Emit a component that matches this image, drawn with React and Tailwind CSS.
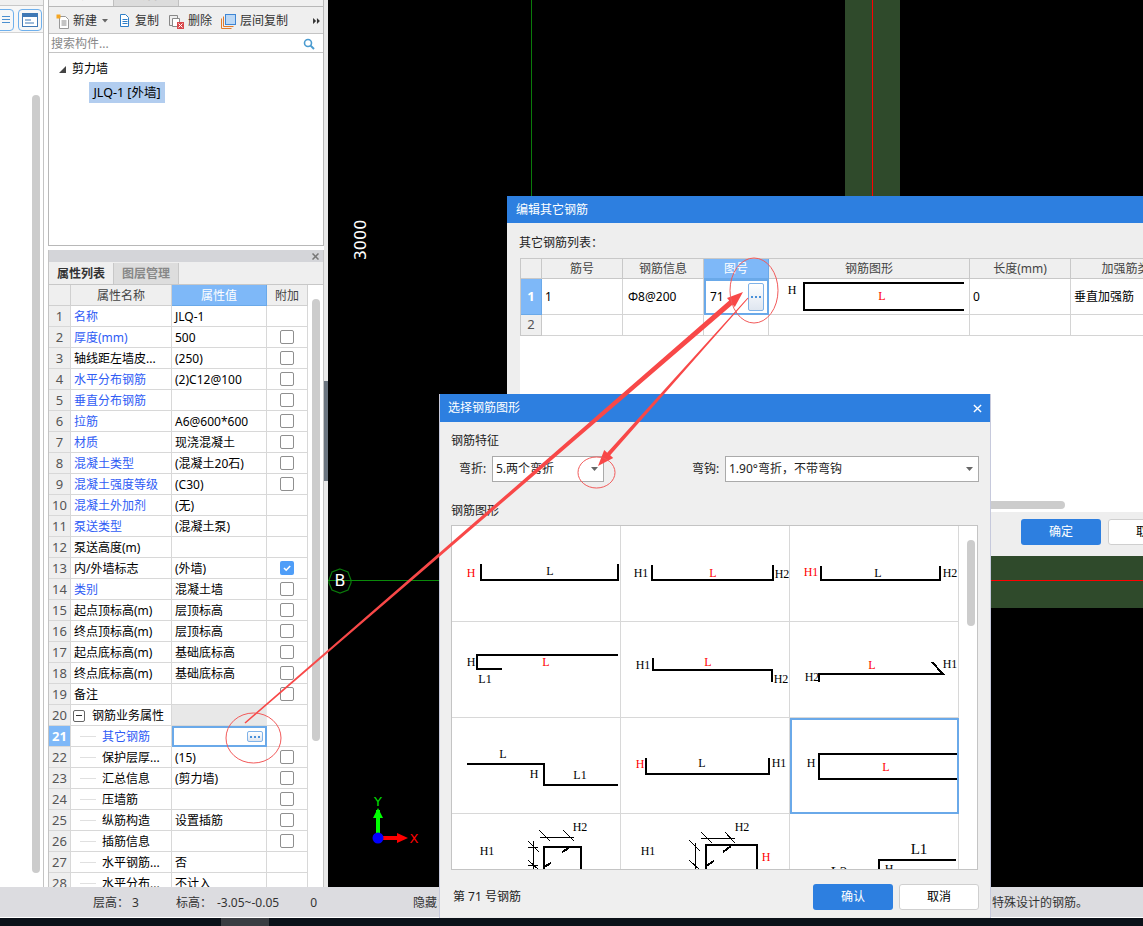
import React from "react";

const rows = [
  ["名称", "JLQ-1", 1, 0], ["厚度(mm)", "500", 1, 1], ["轴线距左墙皮...", "(250)", 0, 1], ["水平分布钢筋", "(2)C12@100", 1, 1],
  ["垂直分布钢筋", "", 1, 1], ["拉筋", "A6@600*600", 1, 1], ["材质", "现浇混凝土", 1, 1], ["混凝土类型", "(混凝土20石)", 1, 1],
  ["混凝土强度等级", "(C30)", 1, 1], ["混凝土外加剂", "(无)", 1, 0], ["泵送类型", "(混凝土泵)", 1, 0], ["泵送高度(m)", "", 0, 0],
  ["内/外墙标志", "(外墙)", 0, 2], ["类别", "混凝土墙", 1, 1], ["起点顶标高(m)", "层顶标高", 0, 1], ["终点顶标高(m)", "层顶标高", 0, 1],
  ["起点底标高(m)", "基础底标高", 0, 1], ["终点底标高(m)", "基础底标高", 0, 1], ["备注", "", 0, 1],
];
const subRows = [
  ["保护层厚...", "(15)", 1], ["汇总信息", "(剪力墙)", 1], ["压墙筋", "", 1], ["纵筋构造", "设置插筋", 1], ["插筋信息", "", 1], ["水平钢筋...", "否", 0], ["水平分布...", "不计入", 0],
];

function Checkbox({ state }) {
  if (!state) return null;
  if (state === 2)
    return (
      <span className="flex h-[14px] w-[14px] items-center justify-center rounded-[2px] bg-[#4f9ef8]">
        <svg width="10" height="10" viewBox="0 0 10 10"><path d="M2 5l2.2 2.2L8.2 3" fill="none" stroke="#fff" strokeWidth="1.6" /></svg>
      </span>
    );
  return <span className="block h-[14px] w-[14px] rounded-[2px] border border-[#8f8f8f] bg-white" />;
}

function DotsButton({ className }) {
  return (
    <span className={"flex items-center justify-center gap-[2px] rounded-[2px] border border-[#7fb2e8] bg-gradient-to-b from-[#ffffff] to-[#dfe6f0] " + className}>
      <i className="block h-[2px] w-[2px] bg-[#4a90d9]" />
      <i className="block h-[2px] w-[2px] bg-[#4a90d9]" />
      <i className="block h-[2px] w-[2px] bg-[#4a90d9]" />
    </span>
  );
}

function Idx({ children, active }) {
  return (
    <div className={"flex h-[21px] items-center justify-center border-b border-r border-[#d8d8d8] pt-[1px] text-[13px] " + (active ? "bg-[#7eb8f8] font-bold text-white" : "bg-[#efefef] text-[#555]")}>
      {children}
    </div>
  );
}
function Cell({ children, className = "text-black pl-[3px]" }) {
  return <div className={"flex h-[21px] items-center overflow-hidden whitespace-nowrap border-b border-r border-[#d8d8d8] pt-[1px] " + className}>{children}</div>;
}
function AttachCell({ state }) {
  return <div className="flex h-[21px] items-center justify-center border-b border-r border-[#d8d8d8]"><Checkbox state={state} /></div>;
}
function SubName({ children, blue }) {
  return (
    <div className={"flex h-[21px] items-center overflow-hidden whitespace-nowrap border-b border-r border-[#d8d8d8] pl-[9px] pt-[1px] " + (blue ? "text-[#2f5cf5]" : "text-black")}>
      <span className="mr-[6px] block h-px w-[16px] shrink-0 bg-[#e0e0e0]" />
      {children}
    </div>
  );
}

function PropertyTable() {
  return (
    <div className="grid grid-cols-[22px_101px_95px_41px] content-start">
      <div className="h-[21px] border-b border-r border-[#d0d0d0] bg-[#efefef]" />
      <div className="flex h-[21px] items-center justify-center border-b border-r border-[#d0d0d0] bg-[#efefef] pt-[1px] text-[#444]">属性名称</div>
      <div className="flex h-[21px] items-center justify-center border-b border-r border-[#6aa9e9] bg-[#7eb8f8] pt-[1px] text-white">属性值</div>
      <div className="flex h-[21px] items-center justify-center border-b border-r border-[#d0d0d0] bg-[#efefef] pt-[1px] text-[#444]">附加</div>
      {rows.map((r, i) => (
        <React.Fragment key={i}>
          <Idx>{i + 1}</Idx>
          <Cell className={"pl-[3px] " + (r[2] ? "text-[#2f5cf5]" : "text-black")}>{r[0]}</Cell>
          <Cell className="pl-[3px] text-black">{r[1]}</Cell>
          <AttachCell state={r[3]} />
        </React.Fragment>
      ))}
      <Idx>20</Idx>
      <Cell className="pl-[2px] text-black">
        <span className="mr-[7px] flex h-[12px] w-[12px] items-center justify-center rounded-[2px] border border-[#666]"><i className="block h-px w-[6px] bg-[#333]" /></span>
        钢筋业务属性
      </Cell>
      <div className="h-[21px] border-b border-[#d8d8d8] bg-[#e8e8e8]" />
      <div className="h-[21px] border-b border-r border-[#d8d8d8]" />
      <Idx active>21</Idx>
      <SubName blue>其它钢筋</SubName>
      <div className="flex h-[21px] items-center justify-end border-2 border-[#6aa9e9] pr-[2px]">
        <DotsButton className="h-[11px] w-[16px]" />
      </div>
      <div className="h-[21px] border-b border-r border-[#d8d8d8]" />
      {subRows.map((r, i) => (
        <React.Fragment key={i}>
          <Idx>{22 + i}</Idx>
          <SubName>{r[0]}</SubName>
          <Cell>{r[1]}</Cell>
          <AttachCell state={r[2]} />
        </React.Fragment>
      ))}
    </div>
  );
}

function ToolBtn({ icon, label, className = "" }) {
  return (
    <div className={"flex items-center gap-[3px] " + className}>
      {icon}
      <span className="text-[#333]">{label}</span>
    </div>
  );
}

function LeftStrip() {
  return (
    <div className="relative flex h-full w-[44px] shrink-0 flex-col border-r border-[#c4c4c4] bg-white">
      <div className="h-[6px] border-b border-[#c8c8c8] bg-[#f0f0f0]" />
      <div className="flex h-[27px] items-center gap-[4px] border-b border-[#d4d4d4] bg-[#f7f7f7] pt-[1px]">
        <div className="ml-[-10px] flex h-[22px] w-[24px] flex-col items-center justify-center gap-[2px] rounded-[4px] border border-[#6fb0ec] pl-[8px]">
          <i className="block h-px w-[8px] bg-[#4a8fd0]" />
          <i className="block h-px w-[8px] bg-[#4a8fd0]" />
          <i className="block h-px w-[8px] bg-[#4a8fd0]" />
        </div>
        <div className="flex h-[22px] w-[24px] items-center justify-center rounded-[4px] border border-[#6fb0ec]">
          <svg width="16" height="14" viewBox="0 0 16 14">
            <rect x="0.5" y="0.5" width="15" height="13" fill="#fff" stroke="#3f78b5" />
            <rect x="0.5" y="0.5" width="15" height="3.5" fill="#3f78b5" />
            <path d="M3 7h6M3 10h9" stroke="#3f78b5" />
          </svg>
        </div>
      </div>
      <div className="ml-[32px] mt-[62px] h-[778px] w-[8px] rounded-full bg-[#cccccc]" />
    </div>
  );
}

function TopPanel() {
  return (
    <div className="h-[246px] overflow-hidden border border-t-0 border-[#b8b8b8] bg-white">
      <div className="flex h-[7px] items-end overflow-hidden border-b border-[#b8b8b8] bg-[#f0f0f0]">
        <div className="flex h-[23px] w-[65px] shrink-0 items-center justify-center border-r border-[#c0c0c0] bg-[#f4f4f4] font-bold text-[#333]">构件列表</div>
        <div className="flex h-[23px] w-[65px] shrink-0 items-center justify-center border-r border-[#c0c0c0] bg-[#dcdcdc] font-bold text-[#888]">图层管理</div>
      </div>
      <div className="flex h-[27px] items-center border-b border-[#c4c4c4] bg-[#efefef] pl-[7px] pt-[2px]">
        <ToolBtn
          label="新建"
          icon={
            <svg width="14" height="15" viewBox="0 0 14 15">
              <path d="M3.5 2.5h6l3 3v9h-9z" fill="#fff" stroke="#999" />
              <path d="M5.5 7h5M5.5 9h5M5.5 11h5" stroke="#888" />
              <rect x="0.5" y="0.5" width="4" height="4" fill="#f5a623" />
            </svg>
          }
        />
        <svg className="ml-[5px]" width="6" height="4" viewBox="0 0 6 4"><path d="M0 0h6L3 3.5z" fill="#666" /></svg>
        <ToolBtn
          className="ml-[10px]"
          label="复制"
          icon={
            <svg width="14" height="15" viewBox="0 0 14 15">
              <path d="M2.5 0.5h5l3 3v9h-8z" fill="#fff" stroke="#2f7fc8" />
              <path d="M4.5 5.5h5M4.5 7.5h5M4.5 9.5h5" stroke="#2f7fc8" />
            </svg>
          }
        />
        <ToolBtn
          className="ml-[10px]"
          label="删除"
          icon={
            <svg className="mr-[1px]" width="15" height="15" viewBox="0 0 15 15">
              <path d="M0.5 1.5h8v10h-8z" fill="#eee" stroke="#888" />
              <path d="M3.5 4.5h7v8h-7z" fill="#fff" stroke="#888" />
              <rect x="8" y="8" width="7" height="7" fill="#d9484c" />
              <path d="M9.5 9.5l4 4M13.5 9.5l-4 4" stroke="#fff" />
            </svg>
          }
        />
        <ToolBtn
          className="ml-[9px]"
          label="层间复制"
          icon={
            <svg className="mr-[1px]" width="15" height="15" viewBox="0 0 15 15">
              <path d="M0.5 4.5v10h10" fill="none" stroke="#e07a2a" />
              <path d="M2.5 2.5v10h10" fill="none" stroke="#e07a2a" />
              <rect x="4.5" y="0.5" width="10" height="10" fill="#bcd8f5" stroke="#3f86d4" />
            </svg>
          }
        />
        <svg className="ml-[25px]" width="7" height="6" viewBox="0 0 8 7"><path d="M0 0l3.5 3.5L0 7zM4.5 0L8 3.5 4.5 7z" fill="#333" /></svg>
      </div>
      <div className="flex h-[19px] items-center justify-between border-b border-[#c4c4c4] pl-[2px] pr-[8px] pt-[2px] text-[#888]">
        搜索构件...
        <svg width="12" height="12" viewBox="0 0 12 12"><circle cx="5" cy="5" r="3.5" fill="none" stroke="#4a9bd0" strokeWidth="1.6" /><path d="M7.6 7.6L11 11" stroke="#4a9bd0" strokeWidth="2" /></svg>
      </div>
      <div className="flex items-center pl-[10px] pt-[7px]">
        <svg width="7" height="7" viewBox="0 0 7 7"><path d="M7 0v7H0z" fill="#444" /></svg>
        <span className="ml-[6px] text-black">剪力墙</span>
      </div>
      <div className="ml-[40px] mt-[4px] flex h-[21px] w-[76px] items-center justify-center bg-[#b2cdef] pt-[1px] text-[12.5px] text-black">JLQ-1 [外墙]</div>
    </div>
  );
}

function BottomPanel() {
  return (
    <div className="mt-[4px] flex h-[637px] flex-col overflow-hidden border-x border-[#c4c4c4] bg-white">
      <div className="flex h-[12px] shrink-0 items-center justify-end bg-[#d4d5d9] pr-[4px]">
        <svg width="7" height="7" viewBox="0 0 7 7"><path d="M0.5 0.5l6 6M6.5 0.5l-6 6" stroke="#777" strokeWidth="1.5" /></svg>
      </div>
      <div className="flex h-[23px] shrink-0 border-b border-[#c8c8c8] bg-[#efefef] pt-[1px]">
        <div className="flex w-[65px] items-center justify-center border-r border-[#c8c8c8] font-bold text-[#333]">属性列表</div>
        <div className="flex w-[65px] items-center justify-center border-r border-[#c8c8c8] bg-[#dddddd] font-bold text-[#888]">图层管理</div>
      </div>
      <div className="flex min-h-0 flex-1">
        <PropertyTable />
        <div className="flex-1 pl-[4px] pt-[14px]">
          <div className="h-[442px] w-[8px] rounded-full bg-[#cccccc]" />
        </div>
      </div>
    </div>
  );
}

function Canvas() {
  return (
    <div className="relative h-full min-w-0 flex-1 overflow-hidden bg-black">
      <div className="absolute left-[203px] top-0 h-[300px] w-px bg-[#0a7a0a]" />
      <div className="absolute left-[517px] top-0 h-[300px] w-[55px] bg-[#2f4a2b]" />
      <div className="absolute left-[544px] top-0 h-[300px] w-px bg-[#ff0000]" />
      <div className="absolute left-[517px] top-[556px] h-[52px] w-[300px] bg-[#2f4a2b]" />
      <div className="absolute left-[517px] top-[580px] h-px w-[300px] bg-[#ff0000]" />
      <svg className="absolute left-0 top-[568px]" width="24" height="26" viewBox="0 0 24 26">
        <path d="M12 1l8 3 3 8v3l-3 7-8 3-8-3-3-7v-3l3-8z" fill="none" stroke="#0a7a0a" strokeWidth="1.2" />
      </svg>
      <div className="absolute left-0 top-[580px] h-px w-[124px] bg-[#0a8a0a]" />
      <span className="absolute left-0 top-[569px] flex h-[24px] w-[24px] items-center justify-center font-['DejaVu_Sans',sans-serif] text-[16px] text-white">B</span>
      <span className="absolute left-[13px] top-[229px] flex h-[22px] w-[40px] -rotate-90 items-center justify-center font-['DejaVu_Sans',sans-serif] text-[16px] text-white">3000</span>
      <svg className="absolute left-[38px] top-[792px]" width="60" height="58" viewBox="0 0 60 58">
        <path d="M12 46V18" stroke="#00ff00" strokeWidth="4" />
        <path d="M7 26l5-10 5 10z" fill="#00ff00" />
        <path d="M12 46H36" stroke="#ff0000" strokeWidth="4" />
        <path d="M31 41l11 5-11 5z" fill="#ff0000" />
        <circle cx="12" cy="46" r="5.5" fill="#0000ff" />
        <text x="12" y="14" textAnchor="middle" fontFamily="DejaVu Sans" fontSize="13" fill="#00e000">Y</text>
        <text x="48" y="51" textAnchor="middle" fontFamily="DejaVu Sans" fontSize="13" fill="#ff0000">X</text>
      </svg>
    </div>
  );
}

function StatusBar() {
  return (
    <div className="flex h-[30px] shrink-0 items-center whitespace-nowrap bg-[#dcdce0] pt-[2px] text-[#333]">
      <span className="ml-[93px]">层高：</span>
      <span className="ml-[3px]">3</span>
      <span className="ml-[37px]">标高：</span>
      <span className="ml-[5px]">-3.05~-0.05</span>
      <span className="ml-[31px]">0</span>
      <span className="ml-[96px]">隐藏：</span>
      <span className="ml-auto mr-[55px]">特殊设计的钢筋。</span>
    </div>
  );
}

function EditDialog() {
  return (
    <div className="absolute left-[507px] top-[196px] flex h-[360px] w-[700px] flex-col overflow-hidden bg-[#eeeeee]">
      <div className="flex h-[27px] shrink-0 items-center bg-[#2d7fe0] pl-[9px] text-white">编辑其它钢筋</div>
      <div className="pl-[12px] pt-[11px] text-[#222]">其它钢筋列表：</div>
      <div className="ml-[13px] mt-[6px] flex h-[254px] w-[700px] flex-col bg-white">
        <div className="grid grid-cols-[21px_81px_81px_65px_201px_101px_122px] justify-start border-l border-t border-[#c8c8c8] text-black">
          <div className="h-[20px] border-b border-r border-[#c8c8c8] bg-[#efefef]" />
          {["筋号", "钢筋信息"].map((t) => (
            <div key={t} className="flex h-[20px] items-center justify-center border-b border-r border-[#c8c8c8] bg-[#efefef] text-[#444]">{t}</div>
          ))}
          <div className="flex h-[20px] items-center justify-center border-b border-r border-[#6aa9e9] bg-[#7eb8f8] text-white">图号</div>
          {["钢筋图形", "长度(mm)", "加强筋类型"].map((t) => (
            <div key={t} className="flex h-[20px] items-center justify-center border-b border-r border-[#c8c8c8] bg-[#efefef] text-[#444]">{t}</div>
          ))}
          <div className="flex h-[36px] items-center justify-center border-b border-r border-[#6aa9e9] bg-[#7eb8f8] text-[13px] font-bold text-white">1</div>
          <div className="flex h-[36px] items-center border-b border-r border-[#d4d4d4] pl-[3px]">1</div>
          <div className="flex h-[36px] items-center border-b border-r border-[#d4d4d4] pl-[5px]">Φ8@200</div>
          <div className="flex h-[36px] items-center justify-between border-2 border-[#6aa9e9] pl-[4px] pr-[3px]">
            71
            <DotsButton className="h-[28px] w-[16px]" />
          </div>
          <div className="h-[36px] overflow-hidden border-b border-r border-[#d4d4d4]">
            <svg width="200" height="35" viewBox="0 0 200 35" className="block">
              <text x="23" y="15" fontFamily="Liberation Serif" fontSize="12" textAnchor="middle">H</text>
              <path d="M195 4H35V31H195" fill="none" stroke="#000" strokeWidth="2" shapeRendering="crispEdges" />
              <text x="113" y="21" fontFamily="Liberation Serif" fontSize="12" fill="#ff0000" textAnchor="middle">L</text>
            </svg>
          </div>
          <div className="flex h-[36px] items-center border-b border-r border-[#d4d4d4] pl-[3px]">0</div>
          <div className="flex h-[36px] items-center border-b border-r border-[#d4d4d4] pl-[3px]">垂直加强筋</div>
          <div className="flex h-[21px] items-center justify-center border-b border-r border-[#c8c8c8] bg-[#efefef] text-[13px] text-[#555]">2</div>
          {[0, 1, 2, 3, 4, 5].map((i) => (
            <div key={i} className="h-[21px] border-b border-r border-[#d4d4d4]" />
          ))}
        </div>
        <div className="flex-1" />
        <div className="mb-[3px] h-[8px] w-[545px] rounded-full bg-[#cccccc]" />
      </div>
      <div className="ml-[514px] mt-[7px] flex gap-[7px]">
        <div className="flex h-[26px] w-[80px] items-center justify-center rounded-[3px] bg-[#2d7fe0] text-white">确定</div>
        <div className="flex h-[26px] w-[80px] items-center justify-center rounded-[3px] border border-[#cfcfcf] bg-white text-black">取消</div>
      </div>
    </div>
  );
}

const LB = ({ x, y, c, red, s = 12 }) => (
  <text x={x} y={y + 4} fontFamily="Liberation Serif" fontSize={s} fill={red ? "#ff0000" : "#000"} textAnchor="middle">{c}</text>
);
const PL = ({ p, w = 2 }) => <polyline points={p} fill="none" stroke="#000" strokeWidth={w} shapeRendering="crispEdges" />;

function Shape({ children, selected }) {
  return (
    <div className={"h-[96px] overflow-hidden " + (selected ? "border-2 border-[#6aa9e9]" : "border-b border-r border-[#d8d8d8]")}>
      <svg width="168" height="95" viewBox="0 0 168 95" className={selected ? "-ml-[1px] -mt-[1px] block" : "block"}>{children}</svg>
    </div>
  );
}

function ShapeGrid() {
  return (
    <div className="ml-[11px] mt-[6px] flex h-[345px] w-[527px] overflow-hidden border border-[#c4c4c4] bg-white">
      <div className="grid w-[507px] shrink-0 grid-cols-3 content-start">
        <Shape><LB x={19} y={47} c="H" red /><LB x={98} y={45} c="L" /><PL p="29,38 29,54 166,54 166,38" /></Shape>
        <Shape><LB x={20} y={47} c="H1" /><LB x={92} y={47} c="L" red /><LB x={161} y={48} c="H2" /><PL p="31,39 31,54 152,54 152,39" /></Shape>
        <Shape><LB x={21} y={46} c="H1" red /><LB x={88} y={47} c="L" /><LB x={160} y={47} c="H2" /><PL p="31,40 31,54 150,54 150,40" /></Shape>
        <Shape><LB x={19} y={40} c="H" /><LB x={94} y={40} c="L" red /><LB x={33} y={57} c="L1" /><PL p="166,33 25,33 25,47 50,47" /></Shape>
        <Shape><LB x={22} y={43} c="H1" /><LB x={87} y={40} c="L" red /><LB x={160} y={57} c="H2" /><PL p="32,36 32,48 151,48 151,60" /></Shape>
        <Shape><LB x={22} y={55} c="H2" /><LB x={82} y={43} c="L" red /><LB x={160} y={42} c="H1" /><PL p="29,60 29,52 153,52 142,40" /></Shape>
        <Shape><LB x={51} y={36} c="L" /><LB x={82} y={56} c="H" /><LB x={128} y={57} c="L1" /><PL p="15,46 92,46 92,67 166,67" /></Shape>
        <Shape><LB x={19} y={46} c="H" red /><LB x={81} y={45} c="L" /><LB x={158} y={45} c="H1" /><PL p="25,40 25,56 148,56 148,40" /></Shape>
        <Shape selected><LB x={20} y={44} c="H" /><LB x={95} y={48} c="L" red /><PL p="166,35 28,35 28,60 166,60" /></Shape>
        <Shape>
          <LB x={35} y={37} c="H1" /><LB x={128} y={13} c="H2" />
          <PL p="92,60 92,33 129,33 129,60" />
          <PL w={1} p="88,23 122,23" /><PL w={1} p="87,16 98,27" /><PL w={1} p="111,16 122,27" />
          <PL w={1} p="81,27 81,60" /><PL w={1} p="76,27 87,38" /><PL w={1} p="76,46 87,56" /><PL w={1} p="76,33 86,33" /><PL w={1} p="76,51 86,51" />
          <PL p="110,38 117,34" /><PL p="92,53 99,49" />
        </Shape>
        <Shape>
          <LB x={27} y={37} c="H1" /><LB x={121} y={13} c="H2" /><LB x={145} y={43} c="H" red />
          <PL p="85,60 85,31 136,31 136,60" />
          <PL w={1} p="80,24 114,24" /><PL w={1} p="80,18 91,29" /><PL w={1} p="104,18 114,29" />
          <PL w={1} p="74,29 74,60" /><PL w={1} p="68,26 79,37" /><PL w={1} p="68,46 79,56" />
          <PL p="102,38 110,32" /><PL p="85,52 93,47" />
        </Shape>
        <Shape><LB x={129} y={36} c="L1" s={15} /><LB x={99} y={55} c="H" /><LB x={49} y={59} c="L2" s={15} /><PL p="89,60 89,46 166,46" /></Shape>
      </div>
      <div className="pl-[8px] pt-[14px]">
        <div className="h-[86px] w-[8px] rounded-full bg-[#cccccc]" />
      </div>
    </div>
  );
}

function SelectBox({ children, className }) {
  return (
    <div className={"flex h-[26px] items-center justify-between border border-[#aaaaaa] bg-white pl-[3px] pr-[5px] text-[#222] " + className}>
      {children}
      <svg width="7" height="4" viewBox="0 0 7 4"><path d="M0 0h7L3.5 4z" fill="#666" /></svg>
    </div>
  );
}

function PickDialog() {
  return (
    <div className="absolute left-[439px] top-[394px] flex h-[524px] w-[552px] flex-col border-x border-[#c6c9dc] bg-[#efefef] text-[#222]">
      <div className="flex h-[28px] shrink-0 items-center justify-between bg-[#2d7fe0] pl-[8px] pr-[8px] text-white">
        选择钢筋图形
        <svg width="9" height="9" viewBox="0 0 10 10"><path d="M1 1l8 8M9 1l-8 8" stroke="#fff" strokeWidth="1.5" /></svg>
      </div>
      <div className="ml-[11px] mt-[10px] leading-[17px]">钢筋特征</div>
      <div className="mt-[7px] flex items-center">
        <span className="ml-[19px] w-[33px]">弯折:</span>
        <SelectBox className="w-[112px]">5.两个弯折</SelectBox>
        <span className="ml-[88px] w-[33px]">弯钩:</span>
        <SelectBox className="w-[254px]">1.90°弯折，不带弯钩</SelectBox>
      </div>
      <div className="ml-[11px] mt-[20px] leading-[17px]">钢筋图形</div>
      <ShapeGrid />
      <div className="mt-[14px] flex items-center">
        <span className="ml-[13px] text-[#222]">第 71 号钢筋</span>
        <div className="ml-auto mr-[11px] flex gap-[6px]">
          <div className="flex h-[26px] w-[80px] items-center justify-center rounded-[3px] bg-[#2d7fe0] text-white">确认</div>
          <div className="flex h-[26px] w-[80px] items-center justify-center rounded-[3px] border border-[#cfcfcf] bg-white text-black">取消</div>
        </div>
      </div>
    </div>
  );
}

function Annotations() {
  return (
    <svg className="pointer-events-none absolute left-0 top-0" width="1143" height="926" viewBox="0 0 1143 926">
      <polygon points="244.5,722.5 729.2,300.6 727,298 743,292 734.8,307 732.6,304.4 245.5,723.5" fill="#f84848" />
      <polygon points="747.6,297.7 607.2,452.7 604.2,450 598,466 613.2,458 610.2,455.3 748.4,298.3" fill="#f84848" />
      <ellipse cx="253.5" cy="738" rx="27.5" ry="25" fill="none" stroke="#f25a5a" />
      <ellipse cx="754" cy="290.5" rx="24" ry="32.5" fill="none" stroke="#f25a5a" />
      <ellipse cx="596.5" cy="472.5" rx="18.5" ry="15.5" fill="none" stroke="#f25a5a" />
    </svg>
  );
}

export default function App() {
  return (
    <div className="relative flex h-[926px] w-[1143px] flex-col overflow-hidden bg-black font-['Noto_Sans','Noto_Sans_CJK_SC',sans-serif] text-[12px]">
      <div className="flex h-[887px] shrink-0">
        <LeftStrip />
        <div className="h-full w-[280px] shrink-0 bg-white pl-[4px]">
          <TopPanel />
          <BottomPanel />
        </div>
        <div className="flex h-full w-[4px] shrink-0 flex-col bg-[#e8e8e8] pt-[381px]">
          <div className="h-[100px] bg-[#6b7580]" />
        </div>
        <Canvas />
      </div>
      <StatusBar />
      <div className="h-px shrink-0 bg-white" />
      <div className="flex flex-1 bg-[#0b1118]">
        <div className="ml-[221px] w-[48px] bg-[#3a3d42]" />
      </div>
      <EditDialog />
      <PickDialog />
      <Annotations />
    </div>
  );
}
